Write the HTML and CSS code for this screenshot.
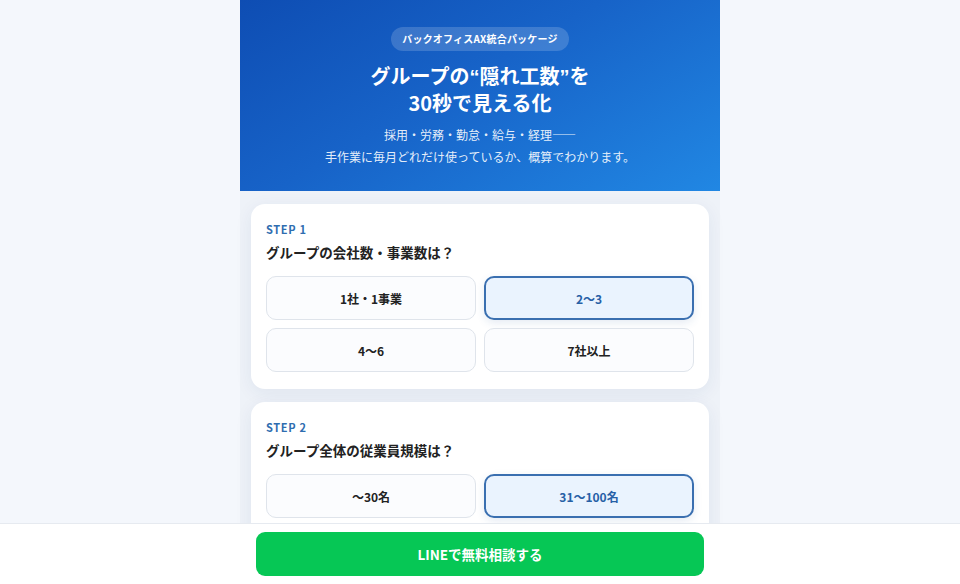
FILE: index.html
```html
<!DOCTYPE html>
<html lang="ja">
<head>
<meta charset="utf-8">
<title>バックオフィスAX統合パッケージ</title>
<link rel="stylesheet" href="styles.css">
</head>
<body>
<div class="page">
  <header class="hero">
    <span class="badge">バックオフィスAX統合パッケージ</span>
    <h1 class="title">グループの<span class="q">“</span>隠れ工数<span class="q">”</span>を<br>30秒で見える化</h1>
    <p class="lead">採用・労務・勤怠・給与・経理――<br>手作業に毎月どれだけ使っているか、概算でわかります。</p>
  </header>
  <main class="steps">
    <section class="card">
      <div class="step">STEP 1</div>
      <h2 class="question">グループの会社数・事業数は？</h2>
      <div class="options">
        <button class="option">1社・1事業</button>
        <button class="option selected">2〜3</button>
        <button class="option">4〜6</button>
        <button class="option">7社以上</button>
      </div>
    </section>
    <section class="card">
      <div class="step">STEP 2</div>
      <h2 class="question">グループ全体の従業員規模は？</h2>
      <div class="options">
        <button class="option">〜30名</button>
        <button class="option selected">31〜100名</button>
        <button class="option">101〜300名</button>
        <button class="option">301名以上</button>
      </div>
    </section>
  </main>
</div>
<div class="cta-bar">
  <a class="cta" href="#">LINEで無料相談する</a>
</div>
</body>
</html>
```
FILE: styles.css
```css
* { box-sizing: border-box; }
html, body { margin: 0; padding: 0; }
body {
  background: #f4f7fc;
  font-family: "Noto Sans CJK JP", "Noto Sans", sans-serif;
  color: #1f2328;
}
.page {
  width: 480px;
  margin: 0 auto;
  min-height: 100vh;
  background: #eef2f8;
}
.hero {
  background: linear-gradient(150deg, #0e4db3 0%, #1763c8 45%, #2187e3 100%);
  color: #fff;
  text-align: center;
  padding: 27px 16px 23px;
  display: flex;
  flex-direction: column;
  align-items: center;
}
.badge {
  display: inline-block;
  height: 24px;
  line-height: 24px;
  padding: 0 11px;
  border-radius: 12px;
  background: rgba(255,255,255,0.17);
  font-size: 10px;
  font-weight: 700;
  letter-spacing: 0.02em;
}
.title {
  margin: 11px 0 0;
  font-size: 20px;
  line-height: 27px;
  font-weight: 700;
}
.title .q {
  font-family: "Liberation Sans", "Noto Sans", sans-serif;
  line-height: 0;
}
.lead {
  margin: 8px 0 0;
  font-size: 12px;
  line-height: 22px;
  color: rgba(255,255,255,0.9);
}
.steps {
  padding: 13px 11px 80px;
  display: flex;
  flex-direction: column;
  gap: 13px;
}
.card {
  background: #fff;
  border-radius: 14px;
  padding: 17px 15px 17px;
  box-shadow: 0 4px 18px rgba(30, 60, 110, 0.07);
}
.step {
  font-size: 11px;
  line-height: 16px;
  font-weight: 700;
  color: #2f6db0;
  letter-spacing: 0.06em;
}
.question {
  margin: 5px 0 0;
  font-size: 13.5px;
  line-height: 20px;
  font-weight: 700;
  color: #222;
}
.options {
  margin-top: 14px;
  display: grid;
  grid-template-columns: 1fr 1fr;
  gap: 8px;
}
.option {
  height: 44px;
  border: 1px solid #dfe4eb;
  border-radius: 10px;
  background: #fbfcfe;
  font-family: inherit;
  font-size: 12px;
  font-weight: 700;
  color: #222;
  cursor: pointer;
}
.option.selected {
  border: 2px solid #3a6fb0;
  background: #eaf3fe;
  color: #2760a6;
  box-shadow: 0 3px 8px rgba(40, 90, 160, 0.12);
}
.cta-bar {
  position: fixed;
  left: 0;
  right: 0;
  bottom: 0;
  background: #fff;
  border-top: 1px solid #e6eaf0;
  padding: 8px 0 8px;
  display: flex;
  justify-content: center;
}
.cta {
  width: 448px;
  height: 44px;
  border-radius: 9px;
  background: #06c755;
  color: #fff;
  text-decoration: none;
  font-size: 13.5px;
  font-weight: 700;
  display: flex;
  align-items: center;
  justify-content: center;
}
```
